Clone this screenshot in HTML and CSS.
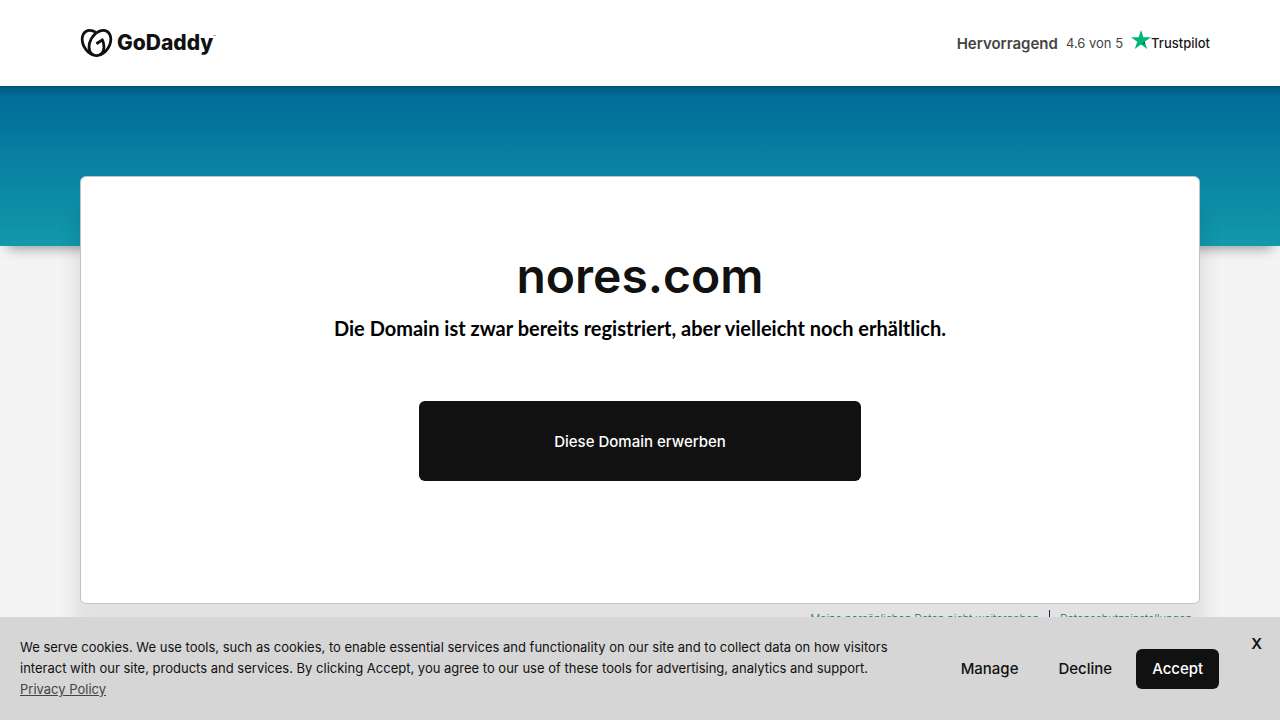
FILE: index.html
```html
<!DOCTYPE html>
<html lang="de">
<head>
  <meta charset="UTF-8">
  <meta name="viewport" content="width=device-width, initial-scale=1.0">
  <title>nores.com</title>
  <link rel="stylesheet" href="styles.css">
</head>
<body>
  <header class="header">
    <a class="logo" href="#" aria-label="GoDaddy">
      <svg class="logo-mark" viewBox="0 1.3 24 21.4" aria-hidden="true">
        <path d="M20.702 2.29c-2.494-1.554-5.778-1.187-8.706.654C9.076 1.104 5.79.736 3.3 2.29c-3.941 2.463-4.42 8.806-1.07 14.167 2.47 3.954 6.333 6.269 9.77 6.226 3.439.043 7.301-2.273 9.771-6.226 3.347-5.361 2.872-11.704-1.069-14.167zM4.042 15.328a12.838 12.838 0 0 1-1.546-3.541 10.12 10.12 0 0 1-.336-3.338c.15-1.98.956-3.524 2.27-4.345 1.315-.822 3.052-.87 4.903-.137.281.113.556.24.825.382A15.11 15.11 0 0 0 7.5 7.54c-2.035 3.255-2.655 6.878-1.945 9.765a13.247 13.247 0 0 1-1.514-1.98zm17.465-3.541a12.866 12.866 0 0 1-1.547 3.54 13.25 13.25 0 0 1-1.513 1.984c.635-2.589.203-5.76-1.353-8.734a.39.39 0 0 0-.563-.153l-4.852 3.032a.397.397 0 0 0-.126.546l.712 1.139a.395.395 0 0 0 .547.126l3.145-1.965c.101.306.203.606.28.916.296 1.086.41 2.214.335 3.337-.15 1.982-.956 3.525-2.27 4.347a4.437 4.437 0 0 1-2.25.65h-.101a4.432 4.432 0 0 1-2.25-.65c-1.314-.822-2.121-2.365-2.27-4.347-.074-1.123.039-2.251.335-3.337a13.212 13.212 0 0 1 4.05-6.482 10.148 10.148 0 0 1 2.849-1.765c1.845-.733 3.586-.685 4.9.137 1.316.822 2.122 2.365 2.271 4.345a10.146 10.146 0 0 1-.33 3.334z"/>
      </svg>
      <span class="logo-name">GoDaddy</span><span class="logo-tm">™</span>
    </a>
    <div class="rating">
      <span class="rating-label">Hervorragend</span>
      <span class="rating-score">4.6 von 5</span>
      <a class="trustpilot" href="#">
        <svg class="trustpilot-star" viewBox="0 0 20 19" aria-hidden="true">
          <path fill="#00b67a" d="M20 7.3h-7.6L10 0 7.6 7.3H0l6.2 4.4L3.8 19l6.2-4.5 6.2 4.5-2.4-7.3z"/>
          <path fill="#005128" d="M14.3 13.3l-.5-1.6-3.8 2.8z"/>
        </svg>
        <span class="trustpilot-name">Trustpilot</span>
      </a>
    </div>
  </header>

  <div class="hero"></div>

  <main class="container">
    <div class="card">
      <h1>nores.com</h1>
      <h2>Die Domain ist zwar bereits registriert, aber vielleicht noch erhältlich.</h2>
      <button type="button" class="buy">Diese Domain erwerben</button>
    </div>
    <div class="links">
      <a href="#">Meine persönlichen Daten nicht weitergeben</a>
      <a href="#">Datenschutzeinstellungen</a>
    </div>
  </main>

  <div class="cookies">
    <p class="cookies-text">We serve cookies. We use tools, such as cookies, to enable essential services and functionality on our site and to collect data on how visitors interact with our site, products and services. By clicking Accept, you agree to our use of these tools for advertising, analytics and support. <a href="#">Privacy Policy</a></p>
    <div class="cookies-buttons">
      <button type="button">Manage</button>
      <button type="button">Decline</button>
      <button type="button" class="accept">Accept</button>
    </div>
    <button type="button" class="close" aria-label="Close">X</button>
  </div>
</body>
</html>
```
FILE: styles.css
```css
* {
  box-sizing: border-box;
}

body {
  margin: 0;
  background-color: #f4f4f4;
  color: #111;
  font-family: Inter, sans-serif;
}

button {
  border: none;
  border-radius: 6px;
  background: none;
  color: #111;
  font-family: inherit;
  font-size: 15px;
  font-weight: 500;
  cursor: pointer;
}

.header {
  display: flex;
  align-items: center;
  justify-content: space-between;
  height: 86px;
  padding: 0 70px 0 80px;
  background-color: #fff;
}

.logo {
  display: flex;
  align-items: center;
  color: #111;
  text-decoration: none;
}

.logo-mark {
  width: 33px;
  height: 28px;
  margin-right: 4px;
  fill: #111;
}

.logo-name {
  font-size: 21px;
  font-weight: 800;
  line-height: 30px;
}

.logo-tm {
  align-self: flex-start;
  margin-top: 6px;
  font-size: 4px;
}

.rating {
  display: flex;
  align-items: center;
  gap: 8px;
  color: #444;
}

.rating-label {
  font-size: 15px;
  font-weight: 600;
}

.rating-score {
  font-size: 13px;
}

.trustpilot {
  display: flex;
  align-items: center;
  color: #191919;
  text-decoration: none;
}

.trustpilot-star {
  width: 20px;
  height: 19px;
  margin-bottom: 8px;
}

.trustpilot-name {
  font-size: 13px;
  font-weight: 500;
}

.hero {
  height: 160px;
  background: linear-gradient(#006a98, #1199ac);
  box-shadow: inset 0 12px 10px -10px rgba(0, 0, 0, 0.3), 0 10px 12px -8px rgba(0, 0, 0, 0.4);
}

.container {
  margin: -70px 80px 0;
}

.card {
  display: flex;
  flex-direction: column;
  align-items: center;
  padding: 64px 20px 122px;
  border: 1px solid #bec3c9;
  border-radius: 6px;
  background-color: #fff;
  box-shadow: 0 38px 16px 8px rgba(0, 0, 0, 0.07);
}

h1 {
  margin: 0;
  font-size: 48px;
  font-weight: 600;
  line-height: 70px;
}

h2 {
  margin: 4px 0 0;
  color: #000;
  font-family: Lato, sans-serif;
  font-size: 20px;
  font-weight: 700;
  line-height: 26px;
  text-align: center;
}

.buy {
  width: 442px;
  max-width: 100%;
  height: 80px;
  margin-top: 60px;
  background-color: #111;
  color: #fff;
}

.links {
  display: flex;
  justify-content: flex-end;
  padding: 6px 8px;
  font-size: 11px;
  font-weight: 300;
  line-height: 18px;
}

.links a {
  color: #09757a;
  text-decoration: none;
}

.links a + a {
  margin-left: 10px;
  padding-left: 10px;
  border-left: 1px solid #4a0d66;
}

.cookies {
  position: fixed;
  right: 0;
  bottom: 0;
  left: 0;
  display: flex;
  align-items: center;
  padding: 20px 18px 20px 20px;
  background-color: #d6d6d6;
}

.cookies-text {
  flex: 1;
  margin: 0;
  font-size: 13px;
  line-height: 21px;
}

.cookies-text a {
  color: #444;
}

.cookies-buttons {
  display: flex;
  gap: 8px;
  margin-left: 50px;
}

.cookies-buttons button {
  height: 40px;
  padding: 0 16px;
}

.cookies-buttons .accept {
  background-color: #111;
  color: #fff;
}

.close {
  align-self: flex-start;
  margin-left: 32px;
  padding: 0;
  font-weight: 600;
  line-height: 14px;
}
```
